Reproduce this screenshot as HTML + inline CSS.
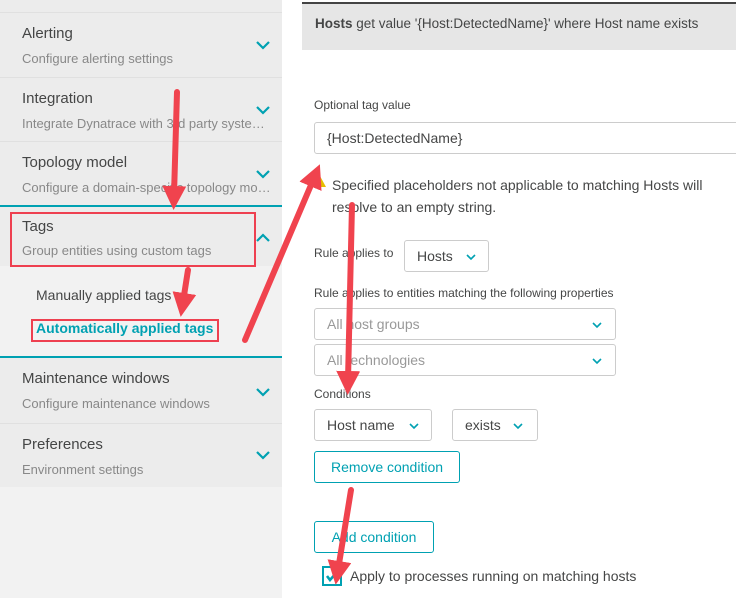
<!DOCTYPE html><html><head><style>
*{margin:0;padding:0;box-sizing:border-box}
body{width:736px;height:598px;overflow:hidden;background:#fff;font-family:"Liberation Sans",sans-serif;position:relative;color:#454646}
.a{position:absolute}
.side{left:0;top:0;width:282px;height:598px;background:#f2f2f2}
.sec{position:absolute;left:0;width:282px;background:#ececec;border-bottom:1px solid #e0e0e0}
.sec .t{position:absolute;left:22px;top:12px;font-size:15px;color:#454646}
.sec .s{position:absolute;left:22px;top:38px;font-size:13px;color:#888;white-space:nowrap;width:252px;overflow:hidden}
.chev{position:absolute;left:255px;width:16px;height:10px}
.sel{position:absolute;border:1px solid #ccc;border-radius:3px;background:#fff;font-size:14px;color:#454646}
.btn{position:absolute;border:1px solid #00a1b2;border-radius:3px;color:#00a1b2;font-size:14px;text-align:center}
.lbl{position:absolute;font-size:12px;color:#454646}
</style></head><body>
<div class="a side"></div>
<div class="sec" style="top:0;height:13px"></div>
<div class="sec" style="top:13px;height:65px"><div class="t">Alerting</div><div class="s">Configure alerting settings</div><svg class="chev" style="top:27px" viewBox="0 0 16 10"><path d="M2 2l6 6 6-6" fill="none" stroke="#00a1b2" stroke-width="2.2"/></svg></div>
<div class="sec" style="top:78px;height:64px"><div class="t">Integration</div><div class="s">Integrate Dynatrace with 3rd party syste…</div><svg class="chev" style="top:27px" viewBox="0 0 16 10"><path d="M2 2l6 6 6-6" fill="none" stroke="#00a1b2" stroke-width="2.2"/></svg></div>
<div class="sec" style="top:142px;height:64px;border:0"><div class="t">Topology model</div><div class="s">Configure a domain-specific topology mo…</div><svg class="chev" style="top:27px" viewBox="0 0 16 10"><path d="M2 2l6 6 6-6" fill="none" stroke="#00a1b2" stroke-width="2.2"/></svg></div>
<div class="a" style="left:0;top:205px;width:282px;height:2px;background:#00a1b2"></div>
<div class="sec" style="top:207px;height:59px;border:0"><div class="t" style="top:11px">Tags</div><div class="s" style="top:36px">Group entities using custom tags</div><svg class="chev" style="top:26px" viewBox="0 0 16 10"><path d="M2 8l6-6 6 6" fill="none" stroke="#00a1b2" stroke-width="2.2"/></svg></div>
<div class="a" style="left:36px;top:287px;font-size:14px;color:#454646">Manually applied tags</div>
<div class="a" style="left:36px;top:320px;font-size:14px;color:#00a1b2;font-weight:bold">Automatically applied tags</div>
<div class="a" style="left:0;top:356px;width:282px;height:2px;background:#00a1b2"></div>
<div class="sec" style="top:358px;height:66px"><div class="t">Maintenance windows</div><div class="s">Configure maintenance windows</div><svg class="chev" style="top:29px" viewBox="0 0 16 10"><path d="M2 2l6 6 6-6" fill="none" stroke="#00a1b2" stroke-width="2.2"/></svg></div>
<div class="sec" style="top:424px;height:63px;border:0"><div class="t">Preferences</div><div class="s">Environment settings</div><svg class="chev" style="top:26px" viewBox="0 0 16 10"><path d="M2 2l6 6 6-6" fill="none" stroke="#00a1b2" stroke-width="2.2"/></svg></div>
<div class="a" style="left:10px;top:212px;width:246px;height:55px;border:2px solid #ee4050"></div>
<div class="a" style="left:31px;top:319px;width:188px;height:23px;border:2px solid #ee4050"></div>

<div class="a" style="left:302px;top:2px;width:434px;height:48px;background:#e6e6e6;border-top:2px solid #444"></div>
<div class="a" style="left:315px;top:16px;font-size:13.5px;color:#454646"><b>Hosts</b> get value '{Host:DetectedName}' where Host name exists</div>
<div class="lbl" style="left:314px;top:98px">Optional tag value</div>
<div class="sel" style="left:314px;top:122px;width:440px;height:32px;padding:7px 0 0 12px">{Host:DetectedName}</div>
<svg class="a" style="left:314px;top:176px" width="12" height="11"><path d="M6 0L12 11H0z" fill="#e6be00"/></svg>
<div class="a" style="left:332px;top:174px;font-size:14px;line-height:22px;color:#454646;width:400px">Specified placeholders not applicable to matching Hosts will resolve to an empty string.</div>
<div class="lbl" style="left:314px;top:246px">Rule applies to</div>
<div class="sel" style="left:404px;top:240px;width:85px;height:32px;padding:7px 0 0 12px">Hosts<svg class="a" style="left:61px;top:13px" width="10" height="7"><path d="M1 1l4 4 4-4" fill="none" stroke="#00a1b2" stroke-width="1.6"/></svg></div>
<div class="lbl" style="left:314px;top:286px">Rule applies to entities matching the following properties</div>
<div class="sel" style="left:314px;top:308px;width:302px;height:32px;padding:7px 0 0 12px;color:#999">All host groups<svg class="a" style="left:277px;top:13px" width="10" height="7"><path d="M1 1l4 4 4-4" fill="none" stroke="#00a1b2" stroke-width="1.6"/></svg></div>
<div class="sel" style="left:314px;top:344px;width:302px;height:32px;padding:7px 0 0 12px;color:#999">All technologies<svg class="a" style="left:277px;top:13px" width="10" height="7"><path d="M1 1l4 4 4-4" fill="none" stroke="#00a1b2" stroke-width="1.6"/></svg></div>
<div class="lbl" style="left:314px;top:387px">Conditions</div>
<div class="sel" style="left:314px;top:409px;width:118px;height:32px;padding:7px 0 0 12px">Host name<svg class="a" style="left:94px;top:13px" width="10" height="7"><path d="M1 1l4 4 4-4" fill="none" stroke="#00a1b2" stroke-width="1.6"/></svg></div>
<div class="sel" style="left:452px;top:409px;width:86px;height:32px;padding:7px 0 0 12px">exists<svg class="a" style="left:60px;top:13px" width="10" height="7"><path d="M1 1l4 4 4-4" fill="none" stroke="#00a1b2" stroke-width="1.6"/></svg></div>
<div class="btn" style="left:314px;top:451px;width:146px;height:32px;line-height:30px">Remove condition</div>
<div class="btn" style="left:314px;top:521px;width:120px;height:32px;line-height:30px">Add condition</div>
<div class="a" style="left:322px;top:566px;width:20px;height:20px;border:2px solid #00a1b2"></div>
<svg class="a" style="left:325px;top:570px" width="14" height="12"><path d="M2 6l3 4 7-8" fill="none" stroke="#00a1b2" stroke-width="2.6"/></svg>
<div class="a" style="left:350px;top:568px;font-size:14px;color:#454646">Apply to processes running on matching hosts</div>

<svg class="a" style="left:0;top:0" width="736" height="598">
<defs><marker id="m" markerWidth="4" markerHeight="4" refX="1.5" refY="2" orient="auto"><path d="M0 0L4 2L0 4z" fill="#f0434e"/></marker></defs>
<g stroke="#f0434e" stroke-width="6" stroke-linecap="round" fill="none" marker-end="url(#m)">
<path d="M177 92L174 195"/>
<path d="M188 270L183 302"/>
<path d="M245 340L314 178"/>
<path d="M352 205L348 380"/>
<path d="M351 490L338 570"/>
</g></svg>
</body></html>
